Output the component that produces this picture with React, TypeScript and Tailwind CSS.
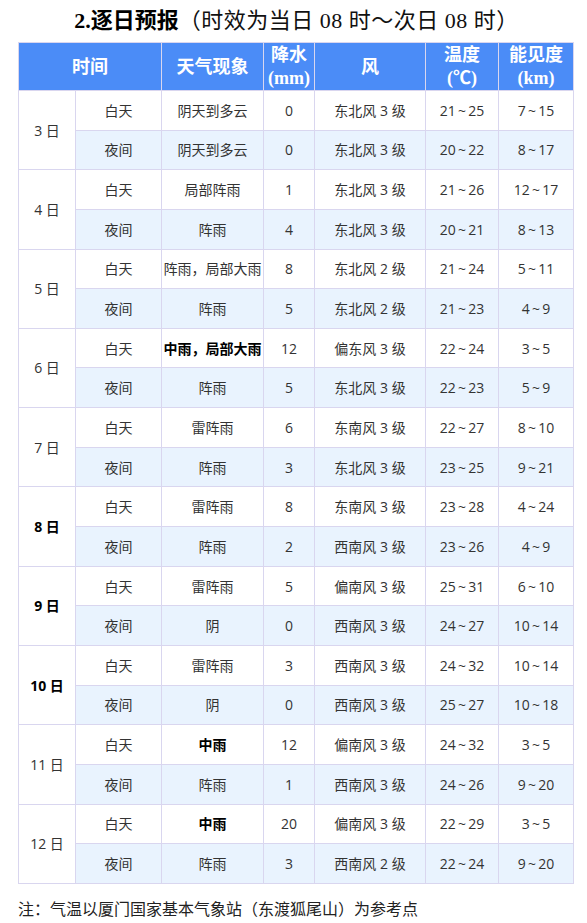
type Row = {
  period: string;
  weather: string;
  rain: string;
  wind: string;
  temp: string;
  vis: string;
  boldWeather?: boolean;
};

type Day = { label: string; bold?: boolean; rows: [Row, Row] };

const days: Day[] = [
  {
    label: "3 日",
    rows: [
      { period: "白天", weather: "阴天到多云", rain: "0", wind: "东北风 3 级", temp: "21~25", vis: "7~15" },
      { period: "夜间", weather: "阴天到多云", rain: "0", wind: "东北风 3 级", temp: "20~22", vis: "8~17" },
    ],
  },
  {
    label: "4 日",
    rows: [
      { period: "白天", weather: "局部阵雨", rain: "1", wind: "东北风 3 级", temp: "21~26", vis: "12~17" },
      { period: "夜间", weather: "阵雨", rain: "4", wind: "东北风 3 级", temp: "20~21", vis: "8~13" },
    ],
  },
  {
    label: "5 日",
    rows: [
      { period: "白天", weather: "阵雨，局部大雨", rain: "8", wind: "东北风 2 级", temp: "21~24", vis: "5~11" },
      { period: "夜间", weather: "阵雨", rain: "5", wind: "东北风 2 级", temp: "21~23", vis: "4~9" },
    ],
  },
  {
    label: "6 日",
    rows: [
      { period: "白天", weather: "中雨，局部大雨", rain: "12", wind: "偏东风 3 级", temp: "22~24", vis: "3~5", boldWeather: true },
      { period: "夜间", weather: "阵雨", rain: "5", wind: "东北风 3 级", temp: "22~23", vis: "5~9" },
    ],
  },
  {
    label: "7 日",
    rows: [
      { period: "白天", weather: "雷阵雨", rain: "6", wind: "东南风 3 级", temp: "22~27", vis: "8~10" },
      { period: "夜间", weather: "阵雨", rain: "3", wind: "东北风 3 级", temp: "23~25", vis: "9~21" },
    ],
  },
  {
    label: "8 日",
    bold: true,
    rows: [
      { period: "白天", weather: "雷阵雨", rain: "8", wind: "东南风 3 级", temp: "23~28", vis: "4~24" },
      { period: "夜间", weather: "阵雨", rain: "2", wind: "西南风 3 级", temp: "23~26", vis: "4~9" },
    ],
  },
  {
    label: "9 日",
    bold: true,
    rows: [
      { period: "白天", weather: "雷阵雨", rain: "5", wind: "偏南风 3 级", temp: "25~31", vis: "6~10" },
      { period: "夜间", weather: "阴", rain: "0", wind: "西南风 3 级", temp: "24~27", vis: "10~14" },
    ],
  },
  {
    label: "10 日",
    bold: true,
    rows: [
      { period: "白天", weather: "雷阵雨", rain: "3", wind: "西南风 3 级", temp: "24~32", vis: "10~14" },
      { period: "夜间", weather: "阴", rain: "0", wind: "西南风 3 级", temp: "25~27", vis: "10~18" },
    ],
  },
  {
    label: "11 日",
    rows: [
      { period: "白天", weather: "中雨", rain: "12", wind: "偏南风 3 级", temp: "24~32", vis: "3~5", boldWeather: true },
      { period: "夜间", weather: "阵雨", rain: "1", wind: "西南风 3 级", temp: "24~26", vis: "9~20" },
    ],
  },
  {
    label: "12 日",
    rows: [
      { period: "白天", weather: "中雨", rain: "20", wind: "偏南风 3 级", temp: "22~29", vis: "3~5", boldWeather: true },
      { period: "夜间", weather: "阵雨", rain: "3", wind: "西南风 2 级", temp: "22~24", vis: "9~20" },
    ],
  },
];

const td = "border border-[#d9d6ef] text-center p-0";

// ranges like "21~25" get thin spaces round the tilde, as in the source
const range = (s: string) => s.replace("~", "\u2009~\u2009");

export default function App() {
  return (
    <div className="min-h-[923px] bg-white pl-[18px] pr-[14px] text-[#333] font-['Open_Sans','Noto_Sans_CJK_SC',sans-serif]">
      {/* Title */}
      <div className="h-[42px] flex items-center justify-center pl-[2px] text-[22px] leading-none text-[#111] font-['Liberation_Serif','Noto_Sans_CJK_SC',serif]">
        <span className="font-bold text-black">2.逐日预报</span>
        <span className="font-normal tracking-[0.5px]">（时效为当日 08 时～次日 08 时）</span>
      </div>

      <table className="table-fixed border-collapse w-[555px] text-[14px]">
        <colgroup>
          <col className="w-[57px]" />
          <col className="w-[86px]" />
          <col className="w-[102px]" />
          <col className="w-[51px]" />
          <col className="w-[111px]" />
          <col className="w-[73px]" />
          <col className="w-[75px]" />
        </colgroup>
        <thead>
          <tr className="h-[48px] bg-[#4b8cf7] text-white font-bold text-[18px] leading-[23px]">
            <th colSpan={2} className={td}>时间</th>
            <th className={td}>天气现象</th>
            <th className={td}>
              降水
              <br />
              <span className="font-['Liberation_Serif',serif]">(mm)</span>
            </th>
            <th className={td}>风</th>
            <th className={td}>
              温度
              <br />
              <span className="font-['Liberation_Serif','Noto_Sans_CJK_SC',serif]">(℃)</span>
            </th>
            <th className={td}>
              能见度
              <br />
              <span className="font-['Liberation_Serif',serif]">(km)</span>
            </th>
          </tr>
        </thead>
        <tbody>
          {days.map((day) =>
            day.rows.map((r, i) => (
              <tr key={day.label + i} className={`h-[39.65px] ${i === 1 ? "bg-[#e9f3fe]" : "bg-white"}`}>
                {i === 0 && (
                  <td rowSpan={2} className={`${td} bg-white ${day.bold ? "font-bold text-black" : ""}`}>
                    {day.label}
                  </td>
                )}
                <td className={td}>{r.period}</td>
                <td className={`${td} ${r.boldWeather ? "font-bold text-black" : ""}`}>{r.weather}</td>
                <td className={td}>{r.rain}</td>
                <td className={td}>{r.wind}</td>
                <td className={td}>{range(r.temp)}</td>
                <td className={td}>{range(r.vis)}</td>
              </tr>
            ))
          )}
        </tbody>
      </table>

      {/* Footnote */}
      <p className="mt-[12px] text-[16px] leading-[24px] text-[#222] font-['Noto_Sans_CJK_SC',sans-serif]">
        注：气温以厦门国家基本气象站（东渡狐尾山）为参考点
      </p>
    </div>
  );
}
